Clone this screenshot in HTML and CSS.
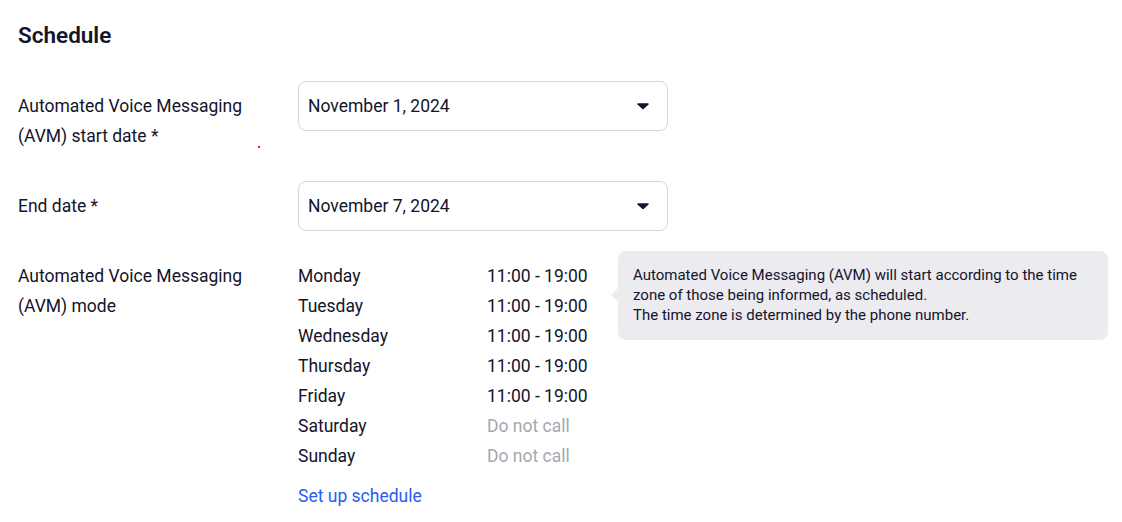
FILE: index.html
```html
<!DOCTYPE html>
<html lang="en">
<head>
  <meta charset="UTF-8">
  <title>Schedule</title>
  <link rel="stylesheet" href="styles.css">
</head>
<body>
  <div class="page">
    <h2>Schedule</h2>

    <div class="row row-start">
      <div class="label">Automated Voice Messaging<br>(AVM) start date *<span class="dot"></span></div>
      <div class="select">
        <span>November 1, 2024</span>
        <svg class="caret" width="12" height="8" viewBox="0 0 12 8"><path d="M1 1.2h10a.8.8 0 0 1 .6 1.3L6.6 7a.8.8 0 0 1-1.2 0L.4 2.5A.8.8 0 0 1 1 1.2z" fill="#14142b"/></svg>
      </div>
    </div>

    <div class="row row-end">
      <div class="label">End date *</div>
      <div class="select">
        <span>November 7, 2024</span>
        <svg class="caret" width="12" height="8" viewBox="0 0 12 8"><path d="M1 1.2h10a.8.8 0 0 1 .6 1.3L6.6 7a.8.8 0 0 1-1.2 0L.4 2.5A.8.8 0 0 1 1 1.2z" fill="#14142b"/></svg>
      </div>
    </div>

    <div class="row row-mode">
      <div class="label mode-label">Automated Voice Messaging<br>(AVM) mode</div>
      <div class="mode">
        <div class="days">
          <div class="day"><span>Monday</span><span>11:00 - 19:00</span></div>
          <div class="day"><span>Tuesday</span><span>11:00 - 19:00</span></div>
          <div class="day"><span>Wednesday</span><span>11:00 - 19:00</span></div>
          <div class="day"><span>Thursday</span><span>11:00 - 19:00</span></div>
          <div class="day"><span>Friday</span><span>11:00 - 19:00</span></div>
          <div class="day"><span>Saturday</span><span class="off">Do not call</span></div>
          <div class="day"><span>Sunday</span><span class="off">Do not call</span></div>
          <a href="#" class="setup">Set up schedule</a>
        </div>
        <div class="hint">
          Automated Voice Messaging (AVM) will start according to the time zone of those being informed, as scheduled.<br>
          The time zone is determined by the phone number.
        </div>
      </div>
    </div>
  </div>
</body>
</html>
```

FILE: styles.css
```css
body {
  margin: 0;
  background: #fff;
  font-family: Roboto, 'Liberation Sans', sans-serif;
  color: #14142b;
}
.page {
  padding: 20px 18px 0;
}
.page h2 {
  margin: 0 0 31px;
  font-size: 22.5px;
  line-height: 30px;
  font-weight: 600;
}
.row {
  display: flex;
  align-items: flex-start;
  margin-bottom: 30px;
}
.label {
  position: relative;
  width: 280px;
  flex-shrink: 0;
  padding-top: 10px;
  font-size: 17.5px;
  line-height: 30px;
}
.dot {
  position: absolute;
  left: 240px;
  top: 65px;
  width: 2px;
  height: 2px;
  background: #e02020;
}
.select {
  width: 370px;
  height: 50px;
  box-sizing: border-box;
  border: 1px solid #d6d6de;
  border-radius: 8px;
  padding: 0 18px 0 9px;
  display: flex;
  align-items: center;
  justify-content: space-between;
  font-size: 17.5px;
}
.row-mode {
  margin-bottom: 0;
}
.mode-label {
  padding-top: 0;
}
.mode {
  display: flex;
  align-items: flex-start;
}
.days {
  width: 290px;
  margin-right: 30px;
  flex-shrink: 0;
  font-size: 17.5px;
  line-height: 30px;
  white-space: nowrap;
}
.day {
  display: flex;
}
.day span:first-child {
  width: 189px;
}
.off {
  color: #a6a6b0;
}
.setup {
  display: inline-block;
  margin-top: 10px;
  color: #2a5cf2;
  text-decoration: none;
}
.setup:hover {
  text-decoration: underline;
}
.hint {
  position: relative;
  width: 490px;
  box-sizing: border-box;
  margin-top: -10px;
  padding: 14px 15px 15px;
  background: #ebebf0;
  border-radius: 8px;
  font-size: 15px;
  line-height: 20px;
}
.hint::before {
  content: '';
  position: absolute;
  left: -7px;
  top: 37px;
  border-top: 7px solid transparent;
  border-bottom: 7px solid transparent;
  border-right: 7px solid #ebebf0;
}
```
